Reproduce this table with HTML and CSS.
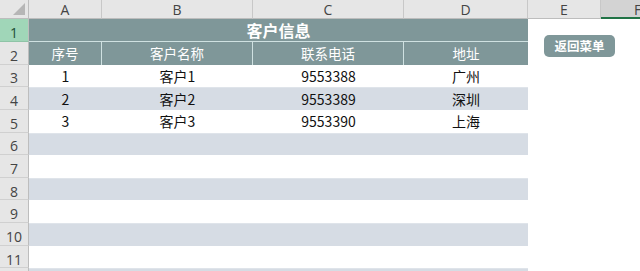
FILE: index.html
```html
<!DOCTYPE html>
<html lang="zh-CN">
<head>
<meta charset="utf-8">
<title>客户信息</title>
<link rel="stylesheet" href="styles.css">
</head>
<body>
<div class="sheet">
  <div class="corner"><span class="tri"></span></div>
  <div class="ch">A</div><div class="ch">B</div><div class="ch">C</div><div class="ch">D</div><div class="ch">E</div><div class="ch ch-sel">F</div>

  <div class="rh rh-sel">1</div>
  <div class="title">客户信息</div>
  <div class="c"></div><div class="c"></div>

  <div class="rh">2</div>
  <div class="th">序号</div><div class="th">客户名称</div><div class="th">联系电话</div><div class="th th-last">地址</div>
  <div class="c"></div><div class="c"></div>

  <div class="rh">3</div>
  <div class="d">1</div><div class="d">客户1</div><div class="d">9553388</div><div class="d">广州</div>
  <div class="c"></div><div class="c"></div>

  <div class="rh">4</div>
  <div class="d alt">2</div><div class="d alt">客户2</div><div class="d alt">9553389</div><div class="d alt">深圳</div>
  <div class="c"></div><div class="c"></div>

  <div class="rh">5</div>
  <div class="d">3</div><div class="d">客户3</div><div class="d">9553390</div><div class="d">上海</div>
  <div class="c"></div><div class="c"></div>

  <div class="rh">6</div>
  <div class="d alt"></div><div class="d alt"></div><div class="d alt"></div><div class="d alt"></div>
  <div class="c"></div><div class="c"></div>

  <div class="rh">7</div>
  <div class="d"></div><div class="d"></div><div class="d"></div><div class="d"></div>
  <div class="c"></div><div class="c"></div>

  <div class="rh">8</div>
  <div class="d alt"></div><div class="d alt"></div><div class="d alt"></div><div class="d alt"></div>
  <div class="c"></div><div class="c"></div>

  <div class="rh">9</div>
  <div class="d"></div><div class="d"></div><div class="d"></div><div class="d"></div>
  <div class="c"></div><div class="c"></div>

  <div class="rh">10</div>
  <div class="d alt"></div><div class="d alt"></div><div class="d alt"></div><div class="d alt"></div>
  <div class="c"></div><div class="c"></div>

  <div class="rh">11</div>
  <div class="d"></div><div class="d"></div><div class="d"></div><div class="d"></div>
  <div class="c"></div><div class="c"></div>

  <div class="rh"></div>
  <div class="d alt"></div><div class="d alt"></div><div class="d alt"></div><div class="d alt"></div>
  <div class="c"></div><div class="c"></div>
</div>
<button class="menu-btn" type="button">返回菜单</button>
</body>
</html>
```
FILE: styles.css
```css
html, body {
  margin: 0;
  padding: 0;
  background: #ffffff;
  overflow: hidden;
}
body {
  width: 640px;
  height: 271px;
  position: relative;
  font-family: "Noto Sans CJK SC", "Noto Sans", sans-serif;
}
.sheet {
  display: grid;
  grid-template-columns: 29px 73px 151px 151px 124px 73px 74px;
  grid-template-rows: 19px 23px repeat(11, 22.65px);
  width: 640px;
  height: 271px;
  overflow: hidden;
}
.sheet > div {
  box-sizing: border-box;
  display: flex;
  align-items: center;
  justify-content: center;
  overflow: hidden;
  white-space: nowrap;
}
.corner {
  background: #e6e6e6;
  border-right: 1px solid #bdbdbd;
  border-bottom: 1px solid #bdbdbd;
  position: relative;
}
.tri {
  position: absolute;
  right: 3px;
  bottom: 3px;
  width: 0;
  height: 0;
  border-left: 12px solid transparent;
  border-bottom: 12px solid #b6b6b6;
}
.ch {
  background: #e6e6e6;
  border-right: 1px solid #c8c8c8;
  border-bottom: 1px solid #bdbdbd;
  color: #444444;
  font-family: "Open Sans", "Noto Sans", sans-serif;
  font-size: 14px;
  padding-top: 1px;
}
.ch-sel {
  background: #d3d3d3;
  border-bottom: 2px solid #217346;
}
.rh {
  background: #e6e6e6;
  border-right: 1px solid #bdbdbd;
  border-bottom: 1px solid #d0d0d0;
  color: #444444;
  font-family: "Open Sans", "Noto Sans", sans-serif;
  font-size: 14px;
  padding-top: 5px;
}
.rh-sel {
  background: #a0d6b8;
  color: #1d4f34;
  border-bottom: 1px solid #8fc4a7;
}
.title {
  grid-column: span 4;
  background: #7f9799;
  color: #ffffff;
  font-weight: bold;
  font-size: 16px;
  border-bottom: 1px solid #cfe1e1;
}
.th {
  background: #7f9799;
  color: #ffffff;
  font-size: 13.5px;
  border-right: 1px solid #cfe1e1;
}
.th-last {
  border-right: none;
}
.d {
  background: #ffffff;
  color: #111111;
  font-size: 14px;
}
.d.alt {
  background: #d6dce4;
  border-top: 1px solid #dfe4ea;
}
.c {
  background: #ffffff;
}
.menu-btn {
  position: absolute;
  left: 544px;
  top: 35px;
  width: 71px;
  height: 22px;
  margin: 0;
  padding: 0;
  border: none;
  border-radius: 5px;
  background: #7f9799;
  color: #ffffff;
  font-family: "Noto Sans CJK SC", sans-serif;
  font-weight: bold;
  font-size: 12.5px;
  line-height: 22px;
  text-align: center;
}
```
